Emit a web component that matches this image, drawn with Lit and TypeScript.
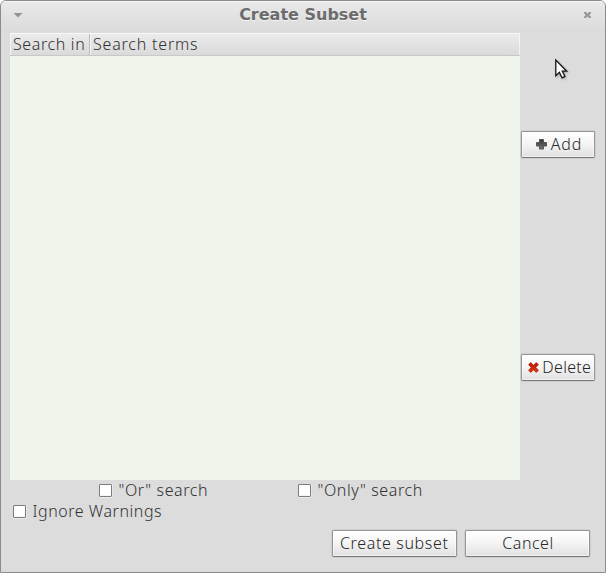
import { LitElement, html, css, svg } from "lit";
import { customElement, property } from "lit/decorators.js";

@customElement("check-option")
class CheckOption extends LitElement {
  @property() label = "";
  static styles = css`
    :host { display: flex; align-items: center; height: 21px; color: #303030; }
    .box { box-sizing: border-box; width: 13px; height: 13px; margin-right: 6.5px; border: 1px solid #7c7c7c; border-radius: 1px; background: #fff; box-shadow: 0 1px 0 #ececec, 1px 0 0 #e6e6e6, inset 0 -1px 0 #f4f4f4; flex: none; }
    .text { white-space: nowrap; padding-bottom: 2px; }
  `;
  render() {
    return html`<span class="box"></span><span class="text">${this.label}</span>`;
  }
}

@customElement("push-button")
class PushButton extends LitElement {
  static styles = css`
    :host { box-sizing: border-box; display: flex; align-items: center; justify-content: center; height: 27px; border: 1px solid #949494; border-bottom-color: #777; border-radius: 2px; background: linear-gradient(#ffffff, #f5f5f5 45%, #e0e0e0); box-shadow: 0 0 0 1px rgba(0, 0, 0, 0.06), inset 0 0 0 1px rgba(255, 255, 255, 0.55); color: #282828; white-space: nowrap; }
  `;
  render() {
    return html`<slot></slot>`;
  }
}

const plusIcon = svg`<defs><linearGradient id="p" x1="0" y1="0" x2="0" y2="1"><stop offset="0" stop-color="#333"/><stop offset="1" stop-color="#777"/></linearGradient></defs><path d="M3.5 .5h4v3h3v3.6h-3v3h-4v-3h-3v-3.6h3z" fill="url(#p)" stroke="#444" stroke-width=".8" stroke-linejoin="round"/>`;
const crossIcon = svg`<defs><linearGradient id="x" x1="0" y1="0" x2="0" y2="1"><stop offset="0" stop-color="#b81a06"/><stop offset="1" stop-color="#e03a14"/></linearGradient></defs><path d="M.6 2.7L2.7.6 5.5 3.2 8.3.6 10.4 2.7 7.8 5.5 10.4 8.3 8.3 10.4 5.5 7.8 2.7 10.4 .6 8.3 3.2 5.5z" fill="url(#x)" stroke="#b01c08" stroke-width=".8" stroke-linejoin="round"/>`;

@customElement("app-root")
class AppRoot extends LitElement {
  static styles = css`
    :host { display: block; width: 606px; height: 573px; background: #fff; font: 300 16px/20px "Noto Sans", "Open Sans", sans-serif; }
    .window { position: relative; box-sizing: border-box; width: 606px; height: 573px; border: 1px solid #8c8a8c; border-radius: 6px 6px 0 0; background: #dcdcdc; overflow: hidden; }
    .title { display: flex; align-items: center; justify-content: space-between; box-sizing: border-box; height: 31px; padding: 0 13px 3px 12px; background: linear-gradient(#e9e9e9, #dcdcdc 90%); box-shadow: inset 0 1px 0 #f7f7f7; }
    .title .name { font: bold 16px/20px "DejaVu Sans", sans-serif; color: #6c6c6c; text-shadow: 0 1px 0 #f3f3f3; }
    svg { display: block; flex: none; }
    .main { display: flex; height: 448px; padding-left: 9px; }
    .table { width: 510px; display: flex; flex-direction: column; background: #eff5ea; margin-top: 1px; }
    .head { display: flex; box-sizing: border-box; height: 23px; flex: none; border-top: 1px solid #f8f8f8; border-bottom: 1px solid #c8c8c8; background: linear-gradient(#ebebeb, #dadada); line-height: 21px; color: #303030; }
    .col { box-sizing: border-box; white-space: nowrap; border-left: 1px solid #f4f4f4; }
    .col.where { width: 80px; padding-left: 2px; border-right: 1px solid #bdbdbd; letter-spacing: 0.62px; }
    .col.terms { flex: 1; padding-left: 2px; border-right: 1px solid #f4f4f4; letter-spacing: 0.8px; }
    .side { width: 74px; margin-left: 1px; display: flex; flex-direction: column; padding-top: 99px; box-sizing: border-box; gap: 196px; }
    .icon { margin-right: 4px; }
    .caption { padding-bottom: 2px; }
    .add { padding-left: 2px; }
    .add .caption { letter-spacing: 0.8px; }
    .delete { padding-left: 3px; }
    .delete .caption { letter-spacing: 0.3px; }
    .delete .icon { margin-right: 3.5px; }
    .create .caption { letter-spacing: 0.65px; margin-right: 0.5px; }
    .cancel .caption { letter-spacing: 0.5px; margin-left: 1px; }
    .searches { display: flex; padding-left: 98px; letter-spacing: 0.6px; }
    .searches check-option { width: 199px; }
    .warn { padding-left: 12px; letter-spacing: 0.55px; }
    .actions { display: flex; gap: 8px; padding: 8px 0 0 331px; }
    .actions push-button { width: 125px; }
    .pointer { position: absolute; left: 553px; top: 57px; filter: drop-shadow(1px 1px 1px rgba(0, 0, 0, 0.25)); }
  `;
  render() {
    return html`<div class="window">
      <div class="title">
        <svg width="10" height="6"><path d="M.5 1h9L5 5.5z" fill="#929292"/></svg>
        <span class="name">Create Subset</span>
        <svg width="9" height="9"><path d="M1 1h2.2l1.3 1.7L5.8 1H8v1.2L6.3 4 8 5.8V7H5.8L4.5 5.3 3.2 7H1V5.8L2.7 4 1 2.2z" fill="#989898"/></svg>
      </div>
      <div class="main">
        <div class="table">
          <div class="head"><div class="col where">Search in</div><div class="col terms">Search terms</div></div>
        </div>
        <div class="side">
          <push-button class="add"><svg class="icon" width="11" height="12">${plusIcon}</svg><span class="caption">Add</span></push-button>
          <push-button class="delete"><svg class="icon" width="11" height="11">${crossIcon}</svg><span class="caption">Delete</span></push-button>
        </div>
      </div>
      <div class="searches">
        <check-option label='"Or" search'></check-option>
        <check-option label='"Only" search'></check-option>
      </div>
      <div class="warn"><check-option label="Ignore Warnings"></check-option></div>
      <div class="actions">
        <push-button class="create"><span class="caption">Create subset</span></push-button>
        <push-button class="cancel"><span class="caption">Cancel</span></push-button>
      </div>
      <svg class="pointer" width="17" height="24"><path d="M1.8 2v15.8l3.6-3.4 2.7 5.4 2.8-1.4-2.6-5.2h4.4z" fill="#fff" stroke="#151515" stroke-width="1.3"/></svg>
    </div>`;
  }
}
